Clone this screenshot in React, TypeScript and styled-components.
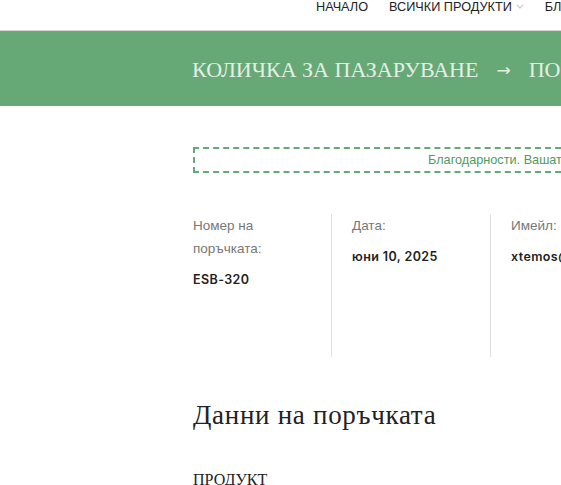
import React, { FC } from 'react'
import styled, { createGlobalStyle } from 'styled-components'

const GlobalStyle = createGlobalStyle`
  html, body {
    margin: 0;
    padding: 0;
    background: #fff;
    overflow: hidden;
  }
  body {
    font-family: "Liberation Sans", Arial, sans-serif;
    color: #333;
  }
`

const Page = styled.div`
  width: 561px;
  height: 485px;
  overflow: hidden;
`

const TopBar = styled.header`
  height: 31px;
  border-bottom: 1px solid #d6d6d6;
  box-sizing: border-box;
  display: flex;
  padding-left: 316px;
  white-space: nowrap;
`

const NavList = styled.nav`
  display: flex;
  gap: 21px;
  height: 13px;
  align-items: center;
`

const NavItem = styled.a`
  font-size: 12.7px;
  color: #222;
  text-decoration: none;
  text-transform: uppercase;
  display: flex;
  align-items: center;
  gap: 4px;
`

const Chevron = styled.span`
  display: inline-block;
  width: 4px;
  height: 4px;
  margin-right: 3px;
  border-right: 1px solid #bbb;
  border-bottom: 1px solid #bbb;
  transform: rotate(45deg) translateY(-2px);
`

const Banner = styled.div`
  height: 75px;
  background: #67a877;
  display: flex;
  align-items: center;
  padding: 3px 0 0 192px;
  box-sizing: border-box;
  white-space: nowrap;
  gap: 18px;
  font-family: "Liberation Serif", "DejaVu Serif", serif;
  font-size: 22px;
  color: #e4efe3;
`

const Arrow = styled.span`
  font-family: "DejaVu Sans", sans-serif;
  font-size: 17px;
`

const Content = styled.main`
  padding: 41px 0 0 193px;
`

const Notice = styled.div`
  width: 700px;
  height: 26px;
  box-sizing: border-box;
  border: 2px dashed #67a877;
  display: flex;
  align-items: center;
  padding-left: 233px;
  font-size: 12.7px;
  color: #4e9a5f;
  white-space: nowrap;
`

const Overview = styled.ul`
  list-style: none;
  margin: 41px 0 0;
  padding: 0;
  display: flex;
  white-space: nowrap;
`

const OverviewItem = styled.li<{ $first?: boolean }>`
  flex-shrink: 0;
  width: 118px;
  height: 143px;
  padding: 0 20px 0 ${(p) => (p.$first ? '0' : '20px')};
  border-right: 1px solid #e0e0e0;
  font-size: 13.5px;
  line-height: 23px;
  color: #777;
`

const Label = styled.div`
  white-space: normal;
`

const Value = styled.strong`
  display: block;
  margin-top: 8px;
  font-family: Inter, "Open Sans", sans-serif;
  font-weight: 600;
  font-size: 12.5px;
  color: #222;
  letter-spacing: 0.4px;
`

const SectionTitle = styled.h2`
  margin: 43px 0 0;
  font-family: "Liberation Serif", "DejaVu Serif", serif;
  font-weight: 400;
  font-size: 27px;
  letter-spacing: 0.7px;
  color: #222;
`

const ColumnHead = styled.div`
  margin-top: 40px;
  font-family: "Liberation Serif", "DejaVu Serif", serif;
  font-size: 16px;
  color: #222;
  text-transform: uppercase;
`

const App: FC = () => (
  <Page>
    <GlobalStyle />
    <TopBar>
      <NavList>
        <NavItem>Начало</NavItem>
        <NavItem>
          Всички продукти <Chevron />
        </NavItem>
        <NavItem>Блог</NavItem>
      </NavList>
    </TopBar>
    <Banner>
      <span>КОЛИЧКА ЗА ПАЗАРУВАНЕ</span>
      <Arrow>→</Arrow>
      <span>ПОРЪЧКА</span>
    </Banner>
    <Content>
      <Notice>Благодарности. Вашата поръчка е получена.</Notice>
      <Overview>
        <OverviewItem $first>
          <Label>Номер на поръчката:</Label>
          <Value>ESB-320</Value>
        </OverviewItem>
        <OverviewItem>
          <Label>Дата:</Label>
          <Value>юни 10, 2025</Value>
        </OverviewItem>
        <OverviewItem>
          <Label>Имейл:</Label>
          <Value>xtemos@example.com</Value>
        </OverviewItem>
      </Overview>
      <SectionTitle>Данни на поръчката</SectionTitle>
      <ColumnHead>Продукт</ColumnHead>
    </Content>
  </Page>
)

export default App
